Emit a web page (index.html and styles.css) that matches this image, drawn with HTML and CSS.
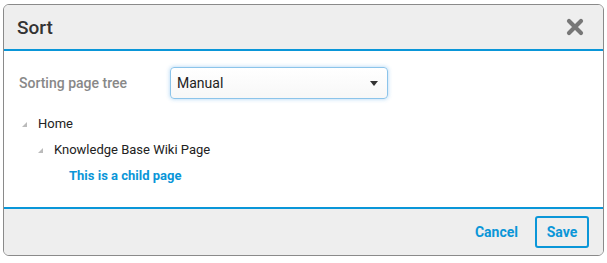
FILE: index.html
```html
<!DOCTYPE html>
<html lang="en">
<head>
    <meta charset="UTF-8">
    <title>Sort</title>
    <link rel="stylesheet" href="styles.css">
</head>
<body>
    <div class="dialog">
        <div class="dialog-header">
            <h1>Sort</h1>
            <span class="close-button">
                <svg width="18" height="18" viewBox="0 0 18 18">
                    <path d="M3 3 L15 15 M15 3 L3 15" stroke="#777" stroke-width="4.2" stroke-linecap="round"/>
                </svg>
            </span>
        </div>
        <div class="dialog-body">
            <div class="form-row">
                <label class="form-label">Sorting page tree</label>
                <div class="select-box">
                    <span>Manual</span>
                    <span class="caret"></span>
                </div>
            </div>
            <ul class="tree">
                <li class="tree-item"><span class="toggle"></span>Home</li>
                <li class="tree-item level-2"><span class="toggle"></span>Knowledge Base Wiki Page</li>
                <li class="tree-item level-3 selected">This is a child page</li>
            </ul>
        </div>
        <div class="dialog-footer">
            <a class="cancel-link">Cancel</a>
            <button class="save-button">Save</button>
        </div>
    </div>
</body>
</html>
```

FILE: styles.css
```css
body {
    margin: 0;
    padding: 4px 3px;
    background: #fff;
    font-family: Roboto, "Liberation Sans", sans-serif;
    font-size: 14px;
    color: #333;
}
.dialog {
    width: 599px;
    border: 1px solid #8a8a8a;
    border-radius: 6px;
    overflow: hidden;
}
.dialog-header {
    height: 44px;
    background: #eee;
    border-bottom: 2px solid #0a96d8;
    display: flex;
    align-items: center;
    justify-content: space-between;
    padding: 0 19px 0 13px;
}
.dialog-header h1 {
    margin: 0;
    font-size: 19px;
    font-weight: 500;
    color: #333;
}
.close-button {
    display: flex;
}
.dialog-body {
    height: 156px;
    box-sizing: border-box;
    padding: 16px 15px 0 15px;
    background: #fff;
}
.form-row {
    display: flex;
    align-items: center;
}
.form-label {
    width: 151px;
    color: #888;
    font-weight: 500;
}
.select-box {
    width: 218px;
    height: 32px;
    box-sizing: border-box;
    border: 1px solid #8cc4ea;
    border-radius: 4px;
    box-shadow: 0 0 4px rgba(70, 160, 230, 0.45);
    background: linear-gradient(#fff, #f7f7f7);
    display: flex;
    align-items: center;
    justify-content: space-between;
    padding: 0 7px 0 6px;
    font-size: 14px;
    color: #222;
}
.caret {
    width: 0;
    height: 0;
    border-left: 4px solid transparent;
    border-right: 4px solid transparent;
    border-top: 5px solid #333;
    margin-right: 2px;
}
.tree {
    list-style: none;
    margin: 11px 0 0 0;
    padding: 0;
    font-size: 13px;
    color: #222;
}
.tree-item {
    height: 26px;
    display: flex;
    align-items: center;
    padding-left: 3px;
}
.tree-item.level-2 {
    padding-left: 19px;
}
.tree-item.level-3 {
    padding-left: 50px;
}
.toggle {
    width: 0;
    height: 0;
    border-left: 5px solid transparent;
    border-bottom: 5px solid #bbb;
    margin-right: 11px;
    margin-top: 2px;
}
.selected {
    color: #0a96d8;
    font-weight: 700;
}
.dialog-footer {
    height: 46px;
    background: #eee;
    border-top: 2px solid #0a96d8;
    display: flex;
    align-items: center;
    justify-content: flex-end;
    padding: 0 14px 0 0;
}
.cancel-link {
    color: #0a96d8;
    font-weight: 700;
    margin-right: 17px;
    cursor: pointer;
}
.save-button {
    width: 54px;
    height: 32px;
    border: 2px solid #0a96d8;
    border-radius: 3px;
    background: #eee;
    color: #0a96d8;
    font-family: Roboto, "Liberation Sans", sans-serif;
    font-size: 14px;
    font-weight: 700;
    cursor: pointer;
}
```
